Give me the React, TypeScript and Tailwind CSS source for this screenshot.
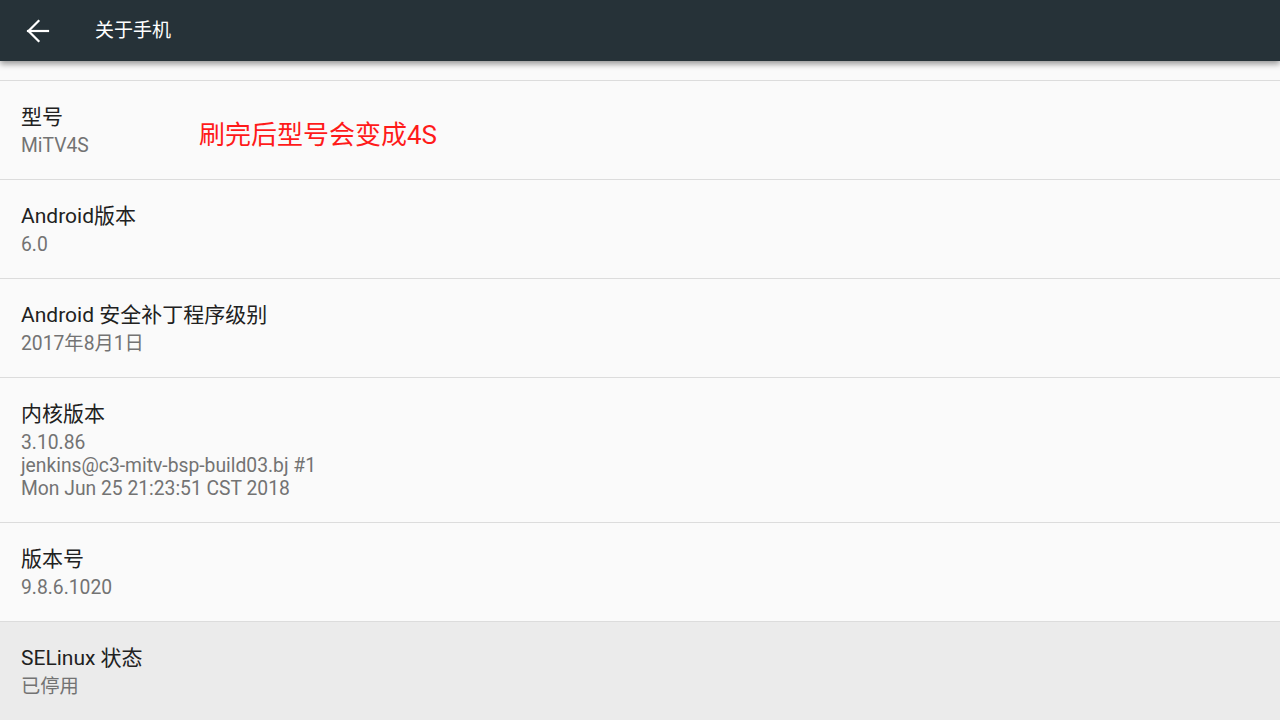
import React from 'react';

type Item = {
    title: string;
    lines: string[];
    focused?: boolean;
};

const items: Item[] = [
    { title: '型号', lines: ['MiTV4S'] },
    { title: 'Android版本', lines: ['6.0'] },
    { title: 'Android 安全补丁程序级别', lines: ['2017年8月1日'] },
    { title: '内核版本', lines: ['3.10.86', 'jenkins@c3-mitv-bsp-build03.bj #1', 'Mon Jun 25 21:23:51 CST 2018'] },
    { title: '版本号', lines: ['9.8.6.1020'] },
    { title: 'SELinux 状态', lines: ['已停用'], focused: true },
];

const BackArrow: React.FC = () => (
    <svg width="24" height="24" viewBox="0 0 24 24" fill="none" stroke="#ffffff" strokeWidth="2.2" strokeLinecap="square">
        <path d="M2 12h20" />
        <path d="M12.5 2 2.5 12l10 10" />
    </svg>
);

const Row: React.FC<{ item: Item }> = ({ item }) => (
    <div className={`border-b border-[#dcdcdc] pl-[21px] pt-[23px] pb-[22px] ${item.focused ? 'bg-[#ebebeb]' : ''}`}>
        <div className="text-[21px] leading-[26px] text-[#212121]">{item.title}</div>
        <div className="mt-[4px]">
            {item.lines.map((line) => (
                <div key={line} className="text-[19.3px] leading-[23px] text-[#737373]">
                    {line}
                </div>
            ))}
        </div>
    </div>
);

const App: React.FC = () => {
    return (
        <div
            className="w-[1280px] h-[720px] overflow-hidden bg-[#fafafa] flex flex-col"
            style={{ fontFamily: 'Roboto, "Noto Sans CJK SC", sans-serif' }}
        >
            {/* Toolbar */}
            <header className="relative z-10 h-[61px] shrink-0 bg-[#263238] flex items-center shadow-[0_3px_6px_rgba(0,0,0,0.4)]">
                <div className="w-[95px] flex items-center pl-[26px]">
                    <BackArrow />
                </div>
                <h1 className="pt-[2px] text-[19px] text-white">关于手机</h1>
            </header>

            {/* Settings list */}
            <div className="relative flex-1">
                <div className="h-[20px] border-b border-[#dcdcdc]" />
                {items.map((item) => (
                    <Row key={item.title} item={item} />
                ))}

                {/* red note over the model row */}
                <div className="absolute left-[199px] top-[58px] text-[26px] leading-[32px] text-[#ff1a1a]">
                    刷完后型号会变成4S
                </div>
            </div>
        </div>
    );
};

export default App;
